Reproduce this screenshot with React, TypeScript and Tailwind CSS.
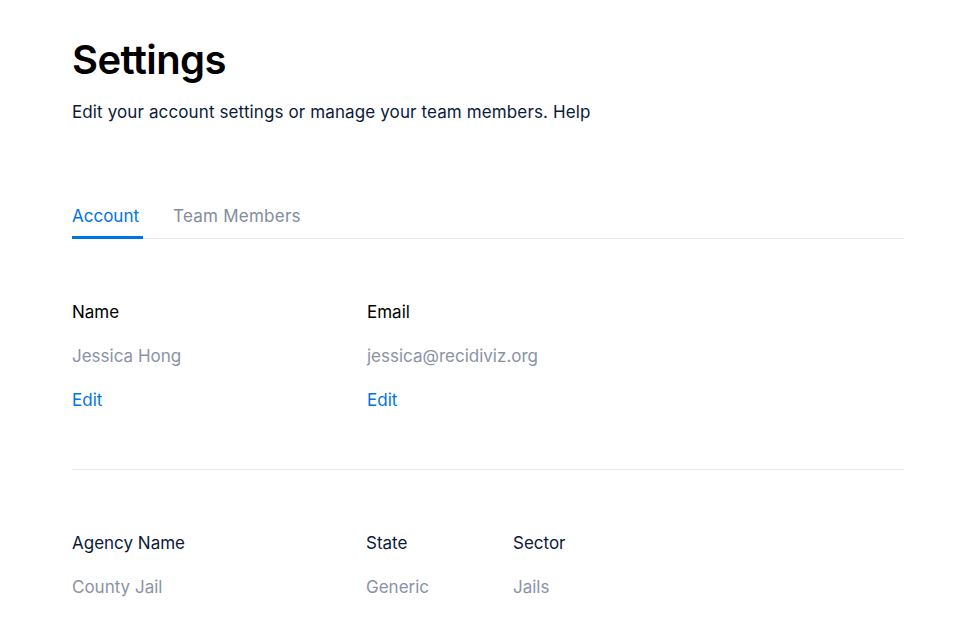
import React from "react";

export default function App() {
  return (
    <div className="min-h-screen bg-white" style={{ fontFamily: "Inter, 'Noto Sans', sans-serif" }}>
      <div className="pl-[72px] pr-[72px] pt-[34px]">
        <h1 className="text-[40px] leading-[52px] font-semibold text-black tracking-[-0.015em]">Settings</h1>
        <p className="mt-[14px] text-[17px] leading-[24px] tracking-[0.12px] text-[#0b1a3a]">
          Edit your account settings or manage your team members. Help
        </p>

        <div className="mt-[80px] flex gap-[30px] border-b border-[#e5e7eb]">
          <div className="pb-[8px] pr-[4px] text-[17px] leading-[24px] text-[#0073e5] border-b-[3px] border-[#0073e5] -mb-px">
            Account
          </div>
          <div className="pb-[8px] text-[17px] leading-[24px] tracking-[0.25px] text-[#848c9e]">Team Members</div>
        </div>

        <div className="mt-[61px] flex">
          <div className="w-[295px] flex flex-col gap-[20px]">
            <div className="text-[17px] leading-[24px] text-black">Name</div>
            <div className="text-[17px] leading-[24px] text-[#8a93a6]">Jessica Hong</div>
            <div className="text-[17px] leading-[24px] text-[#0073e5]">Edit</div>
          </div>
          <div className="flex flex-col gap-[20px]">
            <div className="text-[17px] leading-[24px] text-black">Email</div>
            <div className="text-[17px] leading-[24px] text-[#8a93a6]">jessica@recidiviz.org</div>
            <div className="text-[17px] leading-[24px] text-[#0073e5]">Edit</div>
          </div>
        </div>

        <div className="mt-[57px] border-b border-[#e5e7eb]" />

        <div className="mt-[61px] flex">
          <div className="w-[294px] flex flex-col gap-[20px]">
            <div className="text-[17px] leading-[24px] text-[#0b1a3a]">Agency Name</div>
            <div className="text-[17px] leading-[24px] text-[#8a93a6]">County Jail</div>
          </div>
          <div className="w-[147px] flex flex-col gap-[20px]">
            <div className="text-[17px] leading-[24px] text-[#0b1a3a]">State</div>
            <div className="text-[17px] leading-[24px] text-[#8a93a6]">Generic</div>
          </div>
          <div className="flex flex-col gap-[20px]">
            <div className="text-[17px] leading-[24px] text-[#0b1a3a]">Sector</div>
            <div className="text-[17px] leading-[24px] text-[#8a93a6]">Jails</div>
          </div>
        </div>
      </div>
    </div>
  );
}
